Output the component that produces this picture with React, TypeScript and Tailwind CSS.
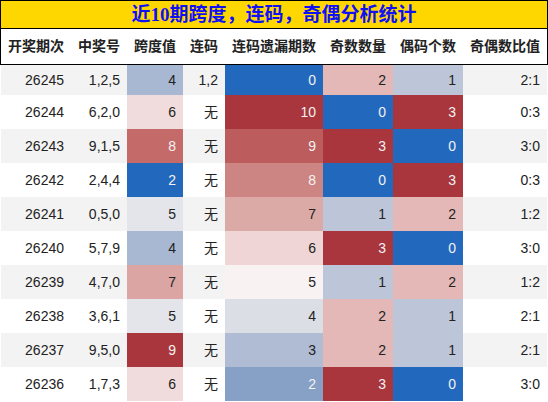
const rows: [string, string, number, string, number, number, number, string][] = [
  ["26245", "1,2,5", 4, "1,2", 0, 2, 1, "2:1"],
  ["26244", "6,2,0", 6, "无", 10, 0, 3, "0:3"],
  ["26243", "9,1,5", 8, "无", 9, 3, 0, "3:0"],
  ["26242", "2,4,4", 2, "无", 8, 0, 3, "0:3"],
  ["26241", "0,5,0", 5, "无", 7, 1, 2, "1:2"],
  ["26240", "5,7,9", 4, "无", 6, 3, 0, "3:0"],
  ["26239", "4,7,0", 7, "无", 5, 1, 2, "1:2"],
  ["26238", "3,6,1", 5, "无", 4, 2, 1, "2:1"],
  ["26237", "9,5,0", 9, "无", 3, 2, 1, "2:1"],
  ["26236", "1,7,3", 6, "无", 2, 3, 0, "3:0"],
]

const headers = ["开奖期次", "中奖号", "跨度值", "连码", "连码遗漏期数", "奇数数量", "偶码个数", "奇偶数比值"]

// heat colours per column
const spanColor: Record<number, string> = {
  2: "bg-[#2268bd] text-[#f2f2f2]",
  4: "bg-[#a9b8d2]",
  5: "bg-[#e3e5ea]",
  6: "bg-[#f0dcdc]",
  7: "bg-[#daa5a3]",
  8: "bg-[#c46b6a] text-[#f2f2f2]",
  9: "bg-[#a8363c] text-[#f2f2f2]",
}

const missColor: Record<number, string> = {
  0: "bg-[#2268bd] text-[#f2f2f2]",
  2: "bg-[#87a0c6] text-[#f2f2f2]",
  3: "bg-[#b0bcd3]",
  4: "bg-[#dcdee6]",
  5: "bg-[#f8f2f2]",
  6: "bg-[#efd5d5]",
  7: "bg-[#dcaaa6]",
  8: "bg-[#cd8583] text-[#f2f2f2]",
  9: "bg-[#bc5c5d] text-[#f2f2f2]",
  10: "bg-[#a8363c] text-[#f2f2f2]",
}

const countColor: Record<number, string> = {
  0: "bg-[#2268bd] text-[#f2f2f2]",
  1: "bg-[#bcc6d8]",
  2: "bg-[#e3b8b6]",
  3: "bg-[#a8363c] text-[#f2f2f2]",
}

const cols = "grid grid-cols-[70px_56px_56px_42px_98px_70px_70px_84px]"

export default function App() {
  return (
    <div
      className="w-[548px] h-[402px] overflow-hidden bg-white text-[#222]"
      style={{ fontFamily: '"Liberation Sans", "Noto Sans CJK SC", sans-serif' }}
    >
      <div
        className="h-[29px] border border-black bg-[#ffd700] flex items-center justify-center text-[19px] font-bold text-[#1010f5] leading-none"
        style={{ fontFamily: '"Liberation Serif", "Noto Sans CJK SC", serif' }}
      >
        近10期跨度，连码，奇偶分析统计
      </div>

      <div className={`${cols} h-[36px] border-x border-b border-black items-center text-[14px] font-bold`}>
        {headers.map((h) => (
          <div key={h} className="text-center whitespace-nowrap">
            {h}
          </div>
        ))}
      </div>

      <div className="px-px text-[14px]">
        {rows.map((r, i) => (
          <div
            key={r[0]}
            className={`${cols} ${i === 0 ? "h-[30px]" : "h-[34px]"} ${i % 2 === 0 ? "bg-[#f3f3f3]" : "bg-white"}`}
          >
            <div className="flex items-center justify-end px-[7px]">{r[0]}</div>
            <div className="flex items-center justify-end px-[7px]">{r[1]}</div>
            <div className={`flex items-center justify-end px-[7px] ${spanColor[r[2]]}`}>{r[2]}</div>
            <div className="flex items-center justify-end px-[7px]">{r[3]}</div>
            <div className={`flex items-center justify-end px-[7px] ${missColor[r[4]]}`}>{r[4]}</div>
            <div className={`flex items-center justify-end px-[7px] ${countColor[r[5]]}`}>{r[5]}</div>
            <div className={`flex items-center justify-end px-[7px] ${countColor[r[6]]}`}>{r[6]}</div>
            <div className="flex items-center justify-end px-[7px]">{r[7]}</div>
          </div>
        ))}
      </div>
    </div>
  )
}
